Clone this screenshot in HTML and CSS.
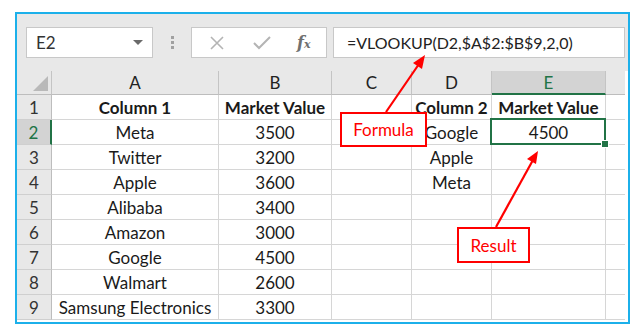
FILE: index.html
```html
<!DOCTYPE html>
<html lang="en">

<head>
  <meta charset="utf-8">
  <title>vlookup example</title>
  <link rel="stylesheet" href="styles.css">
</head>

<body>
  <div class="frame">
    <div class="toolbar">
      <div class="namebox">
        <span>E2</span>
        <span class="caret"></span>
      </div>
      <div class="grip"><i></i><i></i><i></i></div>
      <div class="fxbox">
        <svg width="16" height="16" viewBox="0 0 16 16"><path d="M2 2 L14 14 M14 2 L2 14" stroke="#b4b4b4" stroke-width="1.6" fill="none"/></svg>
        <svg width="20" height="16" viewBox="0 0 20 16"><path d="M2 8 L7 13 L18 2" stroke="#b4b4b4" stroke-width="2" fill="none"/></svg>
        <span class="fx">f<sub>x</sub></span>
      </div>
      <div class="formula">=VLOOKUP(D2,$A$2:$B$9,2,0)</div>
    </div>

    <div class="sheet">
      <div class="hd corner"><span class="tri"></span></div>
      <div class="hd">A</div>
      <div class="hd">B</div>
      <div class="hd">C</div>
      <div class="hd">D</div>
      <div class="hd active-col">E</div>
      <div class="hd last"></div>

      <div class="rh">1</div>
      <div class="c b">Column 1</div>
      <div class="c b">Market Value</div>
      <div class="c"></div>
      <div class="c b">Column 2</div>
      <div class="c b">Market Value</div>
      <div class="c last"></div>

      <div class="rh active-row">2</div>
      <div class="c">Meta</div>
      <div class="c">3500</div>
      <div class="c"></div>
      <div class="c">Google</div>
      <div class="c selected">4500<span class="handle"></span></div>
      <div class="c last"></div>

      <div class="rh">3</div>
      <div class="c">Twitter</div>
      <div class="c">3200</div>
      <div class="c"></div>
      <div class="c">Apple</div>
      <div class="c"></div>
      <div class="c last"></div>

      <div class="rh">4</div>
      <div class="c">Apple</div>
      <div class="c">3600</div>
      <div class="c"></div>
      <div class="c">Meta</div>
      <div class="c"></div>
      <div class="c last"></div>

      <div class="rh">5</div>
      <div class="c">Alibaba</div>
      <div class="c">3400</div>
      <div class="c"></div>
      <div class="c"></div>
      <div class="c"></div>
      <div class="c last"></div>

      <div class="rh">6</div>
      <div class="c">Amazon</div>
      <div class="c">3000</div>
      <div class="c"></div>
      <div class="c"></div>
      <div class="c"></div>
      <div class="c last"></div>

      <div class="rh">7</div>
      <div class="c">Google</div>
      <div class="c">4500</div>
      <div class="c"></div>
      <div class="c"></div>
      <div class="c"></div>
      <div class="c last"></div>

      <div class="rh">8</div>
      <div class="c">Walmart</div>
      <div class="c">2600</div>
      <div class="c"></div>
      <div class="c"></div>
      <div class="c"></div>
      <div class="c last"></div>

      <div class="rh">9</div>
      <div class="c">Samsung Electronics</div>
      <div class="c">3300</div>
      <div class="c"></div>
      <div class="c"></div>
      <div class="c"></div>
      <div class="c last"></div>
    </div>
  </div>

  <!-- annotations drawn over the sheet -->
  <div class="callout formula-note">Formula</div>
  <div class="callout result-note">Result</div>
  <svg class="arrows" width="642" height="335" viewBox="0 0 642 335">
    <line x1="386" y1="112" x2="419" y2="64" stroke="#ff0000" stroke-width="2.2"/>
    <polygon points="425,55 413,63 422,69" fill="#ff0000"/>
    <line x1="496" y1="227" x2="533" y2="160" stroke="#ff0000" stroke-width="2.2"/>
    <polygon points="538,151 527,159 536,164" fill="#ff0000"/>
  </svg>
</body>

</html>
```

FILE: styles.css
```css
body {
	margin: 0;
	background: #fff;
	font-family: Lato, "Liberation Sans", sans-serif;
	color: #1a1a1a;
}

.frame {
	box-sizing: border-box;
	width: 615px;
	height: 312px;
	margin: 12px 0 0 15px;
	border: 2px solid #1cb0ea;
	background: #fff;
	overflow: hidden;
}

.toolbar {
	box-sizing: border-box;
	height: 57px;
	padding: 13px 3px 0 9px;
	background: #e8e8e8;
	display: flex;
	align-items: flex-start;
}

.namebox, .fxbox, .formula {
	box-sizing: border-box;
	height: 31px;
	background: #fff;
	border: 1px solid #c8c8c8;
}

.namebox {
	width: 127px;
	display: flex;
	align-items: center;
	justify-content: space-between;
	padding: 0 9px 0 9px;
	font-size: 17px;
	color: #333;
}

.caret {
	width: 0;
	height: 0;
	border-left: 5px solid transparent;
	border-right: 5px solid transparent;
	border-top: 5px solid #6a6a6a;
}

.grip {
	width: 38px;
	height: 31px;
	display: flex;
	flex-direction: column;
	align-items: center;
	justify-content: center;
	gap: 2px;
}

.grip i {
	width: 3px;
	height: 3px;
	background: #a0a0a0;
}

.fxbox {
	width: 136px;
	display: flex;
	align-items: center;
	padding: 0 0 0 17px;
	gap: 27px;
}

.fx {
	font-family: "DejaVu Serif", "Liberation Serif", serif;
	font-style: italic;
	font-weight: bold;
	font-size: 16px;
	color: #707070;
	margin-left: -2px;
}

.fx sub {
	font-size: 11px;
	vertical-align: 0;
}

.formula {
	width: 292px;
	margin-left: 6px;
	padding: 0 0 0 13px;
	line-height: 29px;
	font-size: 16px;
	color: #222;
}

.sheet {
	display: grid;
	grid-template-columns: 35px 167px 113px 80px 80px 114px 19px;
	grid-template-rows: 24px repeat(9, 25px);
}

.sheet > div {
	box-sizing: border-box;
	border-right: 1px solid #d6d6d6;
	border-bottom: 1px solid #d6d6d6;
	text-align: center;
	font-size: 17px;
	white-space: nowrap;
}

.hd {
	background: #e8e8e8;
	line-height: 24px;
	color: #222;
	border-right-color: #c4c4c4 !important;
	border-bottom-color: #bdbdbd !important;
}

.hd.last {
	border-right: none !important;
}

.corner {
	position: relative;
}

.tri {
	position: absolute;
	right: 3px;
	bottom: 3px;
	width: 0;
	height: 0;
	border-left: 15px solid transparent;
	border-bottom: 15px solid #b9b9b9;
}

.rh {
	background: #e8e8e8;
	line-height: 25px;
	color: #333;
	border-right-color: #bdbdbd !important;
	border-bottom-color: #cfcfcf !important;
}

.active-col {
	background: #d3d3d3;
	color: #217346;
	border-bottom: 2px solid #217346 !important;
}

.active-row {
	background: #d3d3d3;
	color: #217346;
	border-right: 2px solid #217346 !important;
}

.c {
	line-height: 25px;
}

.c.last {
	border-right: none !important;
}

.b {
	font-weight: bold;
}

.selected {
	position: relative;
}

.selected::after {
	content: "";
	position: absolute;
	left: -2px;
	top: -2px;
	right: -1px;
	bottom: -1px;
	border: 2px solid #217346;
}

.handle {
	position: absolute;
	right: -4px;
	bottom: -4px;
	width: 6px;
	height: 6px;
	background: #217346;
	border: 1px solid #fff;
	z-index: 2;
}

.callout {
	position: absolute;
	box-sizing: border-box;
	background: #fff;
	border: 2px solid #ff0000;
	color: #ff0000;
	font-size: 17px;
	display: flex;
	align-items: center;
	justify-content: center;
}

.formula-note {
	left: 340px;
	top: 112px;
	width: 87px;
	height: 35px;
}

.result-note {
	left: 457px;
	top: 227px;
	width: 73px;
	height: 36px;
}

.arrows {
	position: absolute;
	left: 0;
	top: 0;
	pointer-events: none;
}
```
